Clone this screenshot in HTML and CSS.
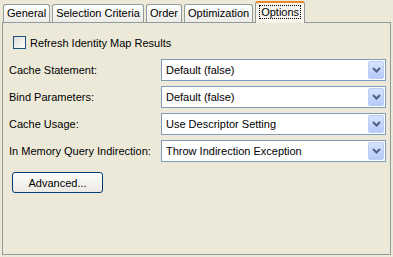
FILE: index.html
```html
<!DOCTYPE html>
<html>
<head>
<meta name="viewport" content="width=device-width, initial-scale=1">
<link rel="stylesheet" href="styles.css">
</head>
<body>

  <div class="tabs">
    <div class="tab">General</div>
    <div class="tab">Selection Criteria</div>
    <div class="tab">Order</div>
    <div class="tab">Optimization</div>
    <div class="tab active"><span class="focus">Options</span></div>
  </div>

  <div class="panel">
    <label class="check">
      <span class="box"></span>
      <span>Refresh Identity Map Results</span>
    </label>

    <div class="fields">
      <div class="label">Cache Statement:</div>
      <div class="combo"><span class="value">Default (false)</span><span class="arrow"><svg width="9" height="6" viewBox="0 0 9 6"><path d="M1 1 L4.5 4.5 L8 1" fill="none" stroke="#4d6185" stroke-width="2"/></svg></span></div>

      <div class="label">Bind Parameters:</div>
      <div class="combo"><span class="value">Default (false)</span><span class="arrow"><svg width="9" height="6" viewBox="0 0 9 6"><path d="M1 1 L4.5 4.5 L8 1" fill="none" stroke="#4d6185" stroke-width="2"/></svg></span></div>

      <div class="label">Cache Usage:</div>
      <div class="combo"><span class="value">Use Descriptor Setting</span><span class="arrow"><svg width="9" height="6" viewBox="0 0 9 6"><path d="M1 1 L4.5 4.5 L8 1" fill="none" stroke="#4d6185" stroke-width="2"/></svg></span></div>

      <div class="label">In Memory Query Indirection:</div>
      <div class="combo"><span class="value">Throw Indirection Exception</span><span class="arrow"><svg width="9" height="6" viewBox="0 0 9 6"><path d="M1 1 L4.5 4.5 L8 1" fill="none" stroke="#4d6185" stroke-width="2"/></svg></span></div>
    </div>

    <button class="btn">Advanced...</button>
  </div>

</body>
</html>
```

FILE: styles.css
```css
body {
  margin: 0;
  background-color: #ece9d8;
  font-family: "Liberation Sans", Arial, sans-serif;
  font-size: 11px;
  color: #000;
}

* {
  box-sizing: border-box;
}

/* Tab strip */
.tabs {
  display: flex;
  align-items: flex-end;
  gap: 2px;
  height: 22px;
  padding-left: 3px;
}

.tab {
  height: 18px;
  padding: 0 3px;
  line-height: 17px;
  border: 1px solid #919b9c;
  border-bottom: none;
  border-radius: 3px 3px 0 0;
  background: linear-gradient(#ffffff, #ecebe6);
}

.tab.active {
  height: 22px;
  margin-bottom: -1px;
  padding: 0 3px;
  line-height: 18px;
  border-top: 2px solid #e68b2c;
  background: #f7f6f1;
  position: relative;
  z-index: 1;
}

.focus {
  border: 1px dotted #000;
  padding: 0 1px;
}

/* Page area */
.panel {
  height: 233px;
  margin: 0 2px 0 2px;
  border: 1px solid #919b9c;
  padding: 13px 4px 0 6px;
}

.check {
  display: flex;
  align-items: center;
  gap: 4px;
  margin-left: 4px;
  height: 13px;
}

.box {
  width: 13px;
  height: 13px;
  border: 1px solid #1c5180;
  background: linear-gradient(135deg, #dcdcd7, #ffffff);
}

.fields {
  display: grid;
  grid-template-columns: 152px 1fr;
  row-gap: 5px;
  margin-top: 10px;
}

.label {
  display: flex;
  align-items: center;
}

.combo {
  display: flex;
  align-items: center;
  height: 22px;
  border: 1px solid #7f9db9;
  background: #fff;
  padding: 1px;
}

.value {
  flex: 1;
  padding-left: 3px;
}

.arrow {
  display: flex;
  align-items: center;
  justify-content: center;
  width: 16px;
  height: 18px;
  border: 1px solid #b9cdf7;
  border-radius: 2px;
  background: linear-gradient(#d8e4fd, #b6caf8);
}

/* Set a style for the push button */
.btn {
  display: block;
  width: 91px;
  height: 21px;
  margin: 10px 0 0 3px;
  border: 1px solid #003c74;
  border-radius: 3px;
  background: linear-gradient(#ffffff, #ece9e2);
  font-family: inherit;
  font-size: 11px;
  padding: 0;
}
```
